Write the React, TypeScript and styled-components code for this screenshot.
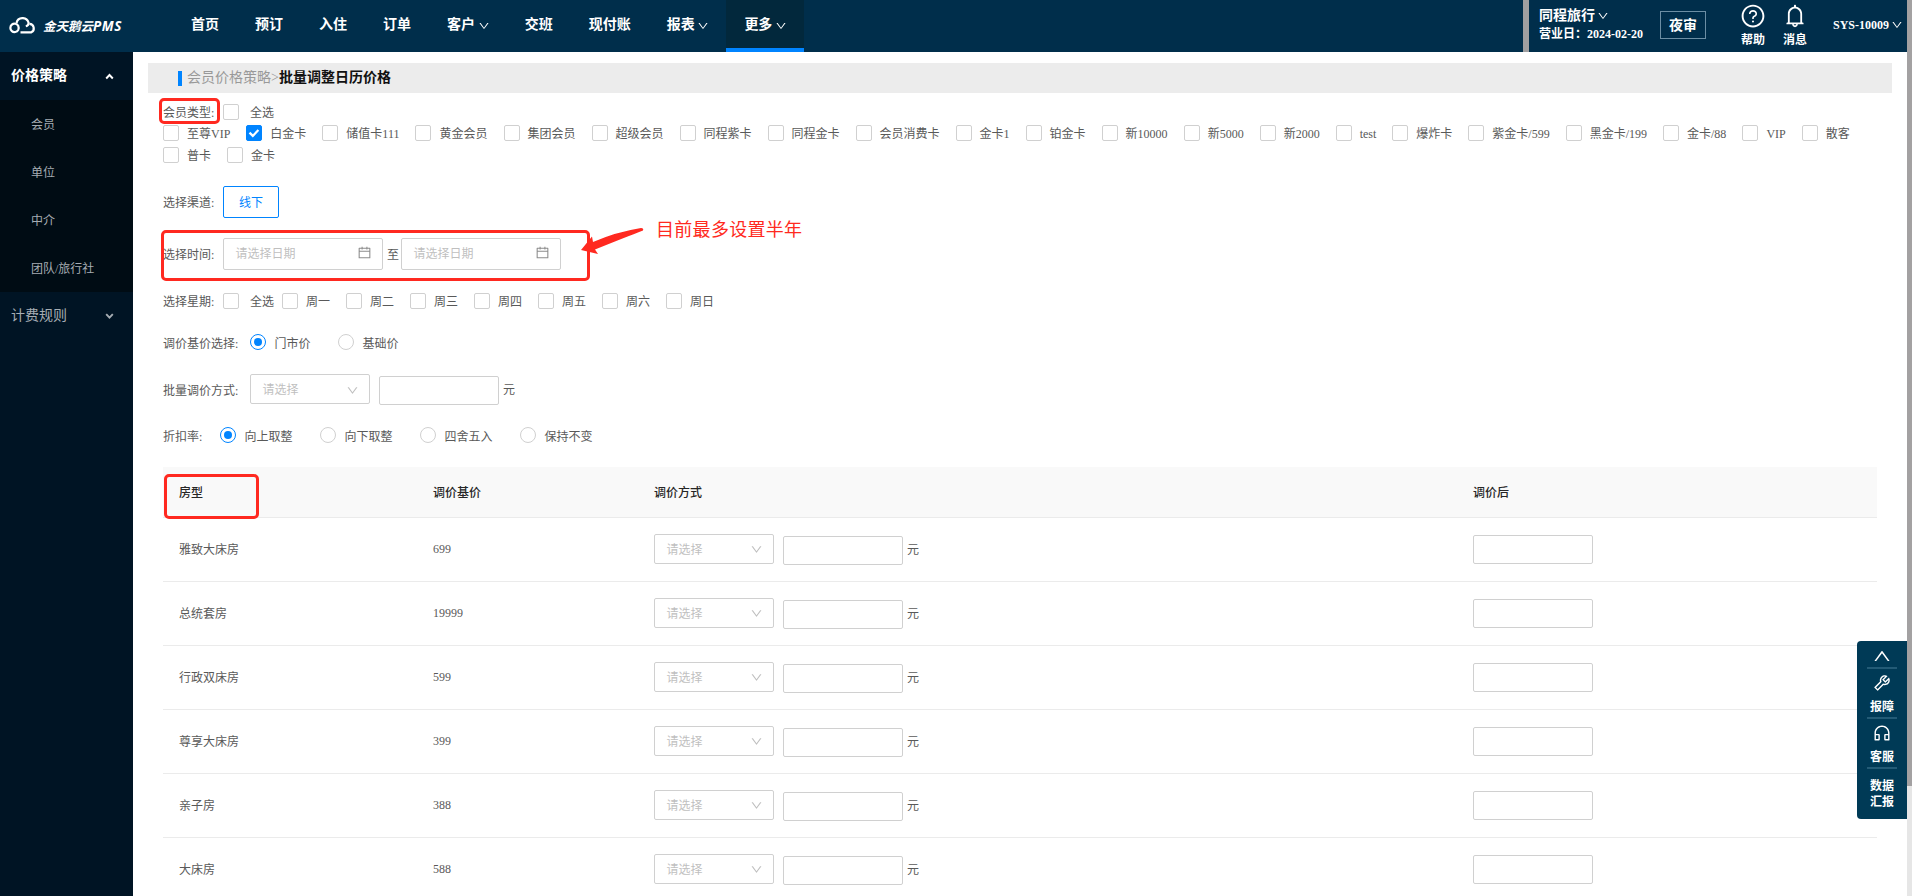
import * as React from "react";
import styled, { createGlobalStyle, css } from "styled-components";
import {
  AiOutlineBell,
  AiOutlineCalendar,
  AiOutlineCustomerService,
  AiOutlineDown,
  AiOutlineQuestionCircle,
  AiOutlineTool,
  AiOutlineUp,
} from "react-icons/ai";

interface INavItem {
  title: string;
  arrow?: boolean;
  active?: boolean;
}

interface IRoom {
  name: string;
  price: number;
}

const NAV: INavItem[] = [
  { title: "首页" },
  { title: "预订" },
  { title: "入住" },
  { title: "订单" },
  { title: "客户", arrow: true },
  { title: "交班" },
  { title: "现付账" },
  { title: "报表", arrow: true },
  { title: "更多", arrow: true, active: true },
];

const SUB_MENU = ["会员", "单位", "中介", "团队/旅行社"];

const MEMBER_TYPES = [
  "至尊VIP", "白金卡", "储值卡111", "黄金会员", "集团会员", "超级会员", "同程紫卡",
  "同程金卡", "会员消费卡", "金卡1", "铂金卡", "新10000", "新5000", "新2000", "test",
  "爆炸卡", "紫金卡/599", "黑金卡/199", "金卡/88", "VIP", "散客", "普卡", "金卡",
];

const WEEK = ["周一", "周二", "周三", "周四", "周五", "周六", "周日"];

const ROUNDING = ["向上取整", "向下取整", "四舍五入", "保持不变"];

const ROOMS: IRoom[] = [
  { name: "雅致大床房", price: 699 },
  { name: "总统套房", price: 19999 },
  { name: "行政双床房", price: 599 },
  { name: "尊享大床房", price: 399 },
  { name: "亲子房", price: 388 },
  { name: "大床房", price: 588 },
];

const GlobalStyle = createGlobalStyle`
  * {
    box-sizing: border-box;
  }

  body {
    margin: 0;
    overflow: hidden;
    background: #fff;
    color: #595959;
    font-family: "Liberation Serif", "Noto Sans CJK SC", serif;
    font-size: 12px;
    line-height: 22px;
  }

  svg {
    flex: none;
  }
`;

const Page = styled.div`
  position: relative;
  display: flex;
  width: 1912px;
  height: 896px;
  overflow: hidden;
`;

const Main = styled.div`
  display: flex;
  flex-direction: column;
  width: 1907px;
`;

const Scrollbar = styled.div`
  width: 5px;
  background: #e6e6e6;
`;

const ScrollThumb = styled.div`
  height: 786px;
  background: #a3a1a2;
`;

const Header = styled.header`
  display: flex;
  flex: none;
  height: 52px;
  background: #002e4b;
  color: #fff;
  white-space: nowrap;
`;

const Logo = styled.div`
  display: flex;
  align-items: center;
  width: 173px;
  padding: 0 0 1px 9px;
  font: italic 700 12.5px/20px "Noto Sans CJK SC", sans-serif;

  svg {
    margin-right: 6px;
  }
`;

const LogoLatin = styled.span`
  font-family: "Open Sans", sans-serif;
  font-size: 13.5px;
  letter-spacing: 0.6px;
`;

const NavItem = styled.a<{ $active?: boolean }>`
  display: flex;
  align-items: center;
  height: 52px;
  padding: 0 18px 2px;
  font-size: 14px;
  font-weight: 600;

  svg {
    margin: 1px -1px 0 2.7px;
    font-size: 12px;
  }

  ${({ $active }) => $active && css`
    padding-bottom: 0;
    border-bottom: 4px solid #0084ff;
    padding-top: 2px;
    background: #02283c;
  `}
`;

const HeaderGap = styled.div`
  width: 6px;
  margin-left: auto;
  background: #a09fa0;
`;

const HeaderRight = styled.div`
  display: flex;
  width: 378px;
  padding-left: 10px;
`;

const Hotel = styled.div`
  width: 121px;
  padding-top: 7px;
  font-weight: 600;
  line-height: 18px;
`;

const HotelName = styled.div`
  display: flex;
  align-items: center;
  font-size: 14px;

  svg {
    margin-left: 2px;
    font-size: 12px;
  }
`;

const NightAudit = styled.div`
  width: 46px;
  height: 28px;
  margin-top: 11px;
  border: 1px solid #6c8ea4;
  font-size: 14px;
  font-weight: 600;
  line-height: 27px;
  text-align: center;
`;

const HeaderIcon = styled.div`
  display: flex;
  flex-direction: column;
  align-items: center;
  width: 42px;
  padding-top: 3px;
  font-weight: 600;
  line-height: 18px;

  svg {
    margin-bottom: 2px;
    font-size: 26px;
  }
`;

const HeaderIcons = styled.div`
  display: flex;
  margin-left: 26px;
`;

const User = styled.div`
  display: flex;
  align-items: center;
  margin-left: 17px;
  padding-bottom: 3px;
  font-weight: 600;

  svg {
    margin-left: 2px;
    font-size: 12px;
  }
`;

const Body = styled.div`
  display: flex;
  flex: 1;
  min-height: 0;
`;

const Sidebar = styled.aside`
  flex: none;
  width: 133px;
  background: #001424;
  color: #a6adb3;
`;

const MenuTitle = styled.div<{ $open?: boolean }>`
  display: flex;
  align-items: center;
  justify-content: space-between;
  height: 48px;
  padding: 0 19px 0 11px;
  color: ${({ $open }) => ($open ? "#fff" : "#a6adb3")};
  font-size: 14px;
  font-weight: ${({ $open }) => ($open ? 600 : 400)};
`;

const SubMenu = styled.div`
  background: #000c14;
`;

const SubMenuItem = styled.div`
  height: 48px;
  padding-left: 31px;
  line-height: 50px;
`;

const Content = styled.main`
  flex: 1;
  padding: 11px 15px 0;
`;

const Breadcrumb = styled.div`
  display: flex;
  align-items: center;
  height: 30px;
  padding-left: 30px;
  background: #ececec;
  color: #999;
  font-size: 14px;

  &::before {
    width: 4px;
    height: 15px;
    margin-right: 5px;
    background: #0084ff;
    content: "";
  }

  b {
    color: #111;
    font-weight: 600;
  }
`;

const Form = styled.div`
  padding: 8px 15px 0;
`;

const FormRow = styled.div<{ $height: number }>`
  display: flex;
  align-items: center;
  height: ${({ $height }) => $height}px;
`;

const Label = styled.span<{ $width: number }>`
  flex: none;
  width: ${({ $width }) => $width}px;
  padding-top: 2px;
`;

const CheckGroup = styled.div`
  display: flex;
  flex-wrap: wrap;
  width: 1714px;
  margin: -1px 0 1px;
`;

const CheckLabel = styled.label<{ $gap?: number; $indent?: number }>`
  display: flex;
  align-items: center;
  height: 22px;
  margin-right: ${({ $gap = 16 }) => $gap}px;

  span {
    margin-left: ${({ $indent = 8 }) => $indent}px;
    padding-top: 1px;
  }
`;

const Box = styled.i<{ $checked?: boolean }>`
  display: flex;
  align-items: center;
  justify-content: center;
  width: 16px;
  height: 16px;
  border: 1px solid ${({ $checked }) => ($checked ? "#0084ff" : "#d0d0d0")};
  border-radius: 2px;
  background: ${({ $checked }) => ($checked ? "#0084ff" : "#fff")};
`;

const RadioLabel = styled.label<{ $width: number }>`
  display: flex;
  align-items: center;
  width: ${({ $width }) => $width}px;

  span {
    padding-top: 1px;
  }
`;

const Radio = styled.i<{ $checked?: boolean }>`
  display: flex;
  align-items: center;
  justify-content: center;
  width: 16px;
  height: 16px;
  margin: -2px 8.5px 0 0;
  border: 1px solid ${({ $checked }) => ($checked ? "#0084ff" : "#d0d0d0")};
  border-radius: 50%;

  &::after {
    display: ${({ $checked }) => ($checked ? "block" : "none")};
    width: 8px;
    height: 8px;
    border-radius: 50%;
    background: #0084ff;
    content: "";
  }
`;

const ChannelButton = styled.div`
  width: 56px;
  height: 32px;
  border: 1px solid #0084ff;
  border-radius: 2px;
  color: #0084ff;
  line-height: 32px;
  text-align: center;
`;

const DateInput = styled.div`
  display: flex;
  align-items: center;
  justify-content: space-between;
  width: 160px;
  height: 32px;
  padding: 0 10px 1px 11.5px;
  border: 1px solid #d0d0d0;
  border-radius: 2px;
  color: #bfbfbf;

  svg {
    margin-bottom: 3px;
    color: #8c8c8c;
    font-size: 15px;
  }
`;

const To = styled.span`
  width: 18px;
  padding: 1px 0 0 4px;
`;

const SelectBox = styled.div`
  display: flex;
  align-items: center;
  justify-content: space-between;
  width: 120px;
  height: 30px;
  padding: 2px 10px 0 11.5px;
  border: 1px solid #d0d0d0;
  border-radius: 2px;
  color: #bfbfbf;

  svg {
    font-size: 13px;
  }
`;

const TextBox = styled.div`
  width: 120px;
  height: 29px;
  border: 1px solid #d0d0d0;
  border-radius: 2px;
`;

const Adjust = styled.div`
  display: flex;
  align-items: center;
  margin-top: -2px;

  ${TextBox} {
    margin: 3px 4px 0 9px;
  }
`;

const Unit = styled.span`
  padding-top: 2px;
`;

const Table = styled.div`
  width: 1714px;
  margin-top: 20px;
`;

const Row = styled.div<{ $head?: boolean }>`
  display: grid;
  grid-template-columns: 254px 221px 819px 1fr;
  align-items: center;
  height: ${({ $head }) => ($head ? 51 : 64)}px;
  padding-left: 16px;
  border-bottom: 1px solid #ebebeb;

  ${({ $head }) => $head && css`
    padding-top: 1px;
    background: #f9f9f9;
    color: #262626;
    font-weight: 500;
  `}
`;

const Price = styled.span`
  padding-bottom: 2px;
`;

const FloatPanel = styled.div`
  position: absolute;
  top: 641px;
  left: 1857px;
  display: flex;
  flex-direction: column;
  align-items: center;
  width: 50px;
  height: 178px;
  border-radius: 4px 0 0 4px;
  background: #003a56;
  color: #fff;
  font-weight: 600;
  line-height: 16px;
`;

const FloatItem = styled.div<{ $height: number }>`
  display: flex;
  flex-direction: column;
  align-items: center;
  justify-content: center;
  width: 30px;
  height: ${({ $height }) => $height}px;
  padding-top: 1px;

  & + & {
    border-top: 2px solid #235b76;
  }

  svg {
    margin-bottom: 6px;
    font-size: 20px;
  }

  &:first-child svg {
    margin: 2px 0 0;
  }
`;

const Mark = styled.div<{ $x: number; $y: number; $w: number; $h: number }>`
  position: absolute;
  top: ${({ $y }) => $y}px;
  left: ${({ $x }) => $x}px;
  width: ${({ $w }) => $w}px;
  height: ${({ $h }) => $h}px;
  border: 3px solid #ff2920;
  border-radius: 5px;
`;

const Arrow = styled.svg`
  position: absolute;
  top: 224px;
  left: 578px;
`;

const Note = styled.div`
  position: absolute;
  top: 216px;
  left: 656px;
  color: #ff2920;
  font: 18px/24px "Noto Sans CJK SC", sans-serif;
  letter-spacing: 0.3px;
  white-space: nowrap;
`;

const Check: React.FC<{ text: string; checked?: boolean; gap?: number; indent?: number }> = ({ text, checked, gap, indent }) => (
  <CheckLabel $gap={gap} $indent={indent}>
    <Box $checked={checked}>
      {checked && (
        <svg width="12" height="10" viewBox="0 0 12 10">
          <path d="M1.5 4.6 4.8 7.9 10.4 2" fill="none" stroke="#fff" strokeWidth="2.2" />
        </svg>
      )}
    </Box>
    <span>{text}</span>
  </CheckLabel>
);

const MenuArrow: React.FC<{ up?: boolean }> = ({ up }) => (
  <svg width="9" height="7" viewBox="0 0 9 7">
    <path d={up ? "M1.2 5.5 4.5 2 7.8 5.5" : "M1.2 1.2 4.5 4.7 7.8 1.2"} fill="none" stroke="currentColor" strokeWidth="1.9" />
  </svg>
);

const AdjustFields = () => (
  <Adjust>
    <SelectBox>请选择<AiOutlineDown /></SelectBox>
    <TextBox />
    <Unit>元</Unit>
  </Adjust>
);

export default class App extends React.Component {
  public render(): React.ReactNode {
    return <Page>
      <GlobalStyle />
      <Main>
        {this.renderHeader()}
        <Body>
          <Sidebar>
            <MenuTitle $open>价格策略<MenuArrow up /></MenuTitle>
            <SubMenu>
              {SUB_MENU.map(item => <SubMenuItem key={item}>{item}</SubMenuItem>)}
            </SubMenu>
            <MenuTitle>计费规则<MenuArrow /></MenuTitle>
          </Sidebar>
          <Content>
            <Breadcrumb>会员价格策略&gt;<b>批量调整日历价格</b></Breadcrumb>
            {this.renderForm()}
          </Content>
        </Body>
      </Main>
      <Scrollbar><ScrollThumb /></Scrollbar>

      <FloatPanel>
        <FloatItem $height={26}><AiOutlineUp /></FloatItem>
        <FloatItem $height={50}><AiOutlineTool />报障</FloatItem>
        <FloatItem $height={50}><AiOutlineCustomerService />客服</FloatItem>
        <FloatItem $height={50}><div>数据</div><div>汇报</div></FloatItem>
      </FloatPanel>

      <Mark $x={159} $y={98} $w={61} $h={26} />
      <Mark $x={161} $y={230} $w={429} $h={51} />
      <Mark $x={164} $y={474} $w={95} $h={45} />
      <Arrow width="68" height="34" viewBox="0 0 68 34">
        <path d="M3 26 14 12.500 15 18Q38 8 63 4Q66 4 65 6.500Q48 13 17 25.500L20 30Z" fill="#ff2920" />
      </Arrow>
      <Note>目前最多设置半年</Note>
    </Page>;
  }

  private renderHeader() {
    return <Header>
      <Logo>
        <svg width="28" height="18" viewBox="0 0 28 18" fill="none" stroke="#fff" strokeWidth="2.2">
          <path d="M9.200 8.800A4.200 4.200 0 1 0 9.200 13Q10.200 11 9.200 8.800M11.500 15.300H22.300A4.500 4.500 0 0 0 20.500 6.800" />
          <path d="M7.500 6A6.200 6.200 0 0 1 19.500 5.500Q20 8.500 16.800 9.300" />
        </svg>
        金天鹅云<LogoLatin>PMS</LogoLatin>
      </Logo>
      {NAV.map(({ title, arrow, active }) =>
        <NavItem key={title} $active={active}>{title}{arrow && <AiOutlineDown />}</NavItem>
      )}
      <HeaderGap />
      <HeaderRight>
        <Hotel>
          <HotelName>同程旅行<AiOutlineDown /></HotelName>
          <div>营业日：2024-02-20</div>
        </Hotel>
        <NightAudit>夜审</NightAudit>
        <HeaderIcons>
          <HeaderIcon><AiOutlineQuestionCircle />帮助</HeaderIcon>
          <HeaderIcon><AiOutlineBell />消息</HeaderIcon>
        </HeaderIcons>
        <User>SYS-10009<AiOutlineDown /></User>
      </HeaderRight>
    </Header>;
  }

  private renderForm() {
    return <Form>
      <FormRow $height={22}>
        <Label $width={60}>会员类型:</Label>
        <Check text="全选" indent={11} />
      </FormRow>
      <CheckGroup>
        {MEMBER_TYPES.map(type => <Check key={type} text={type} checked={type === "白金卡"} />)}
      </CheckGroup>
      <FormRow $height={70}>
        <Label $width={60}>选择渠道:</Label>
        <ChannelButton>线下</ChannelButton>
      </FormRow>
      <FormRow $height={34}>
        <Label $width={60}>选择时间:</Label>
        <DateInput>请选择日期<AiOutlineCalendar /></DateInput>
        <To>至</To>
        <DateInput>请选择日期<AiOutlineCalendar /></DateInput>
      </FormRow>
      <FormRow $height={60}>
        <Label $width={60}>选择星期:</Label>
        <Check text="全选" indent={11} gap={8} />
        {WEEK.map(day => <Check key={day} text={day} />)}
      </FormRow>
      <FormRow $height={24}>
        <Label $width={87}>调价基价选择:</Label>
        <RadioLabel $width={88}><Radio $checked /><span>门市价</span></RadioLabel>
        <RadioLabel $width={88}><Radio /><span>基础价</span></RadioLabel>
      </FormRow>
      <FormRow $height={70}>
        <Label $width={87}>批量调价方式:</Label>
        <AdjustFields />
      </FormRow>
      <FormRow $height={22}>
        <Label $width={57}>折扣率:</Label>
        {ROUNDING.map((rule, i) =>
          <RadioLabel key={rule} $width={100}><Radio $checked={i === 0} /><span>{rule}</span></RadioLabel>
        )}
      </FormRow>
      <Table>
        <Row $head>
          <span>房型</span>
          <span>调价基价</span>
          <span>调价方式</span>
          <span>调价后</span>
        </Row>
        {ROOMS.map(({ name, price }) =>
          <Row key={name}>
            <span>{name}</span>
            <Price>{price}</Price>
            <AdjustFields />
            <TextBox />
          </Row>
        )}
      </Table>
    </Form>;
  }
}
